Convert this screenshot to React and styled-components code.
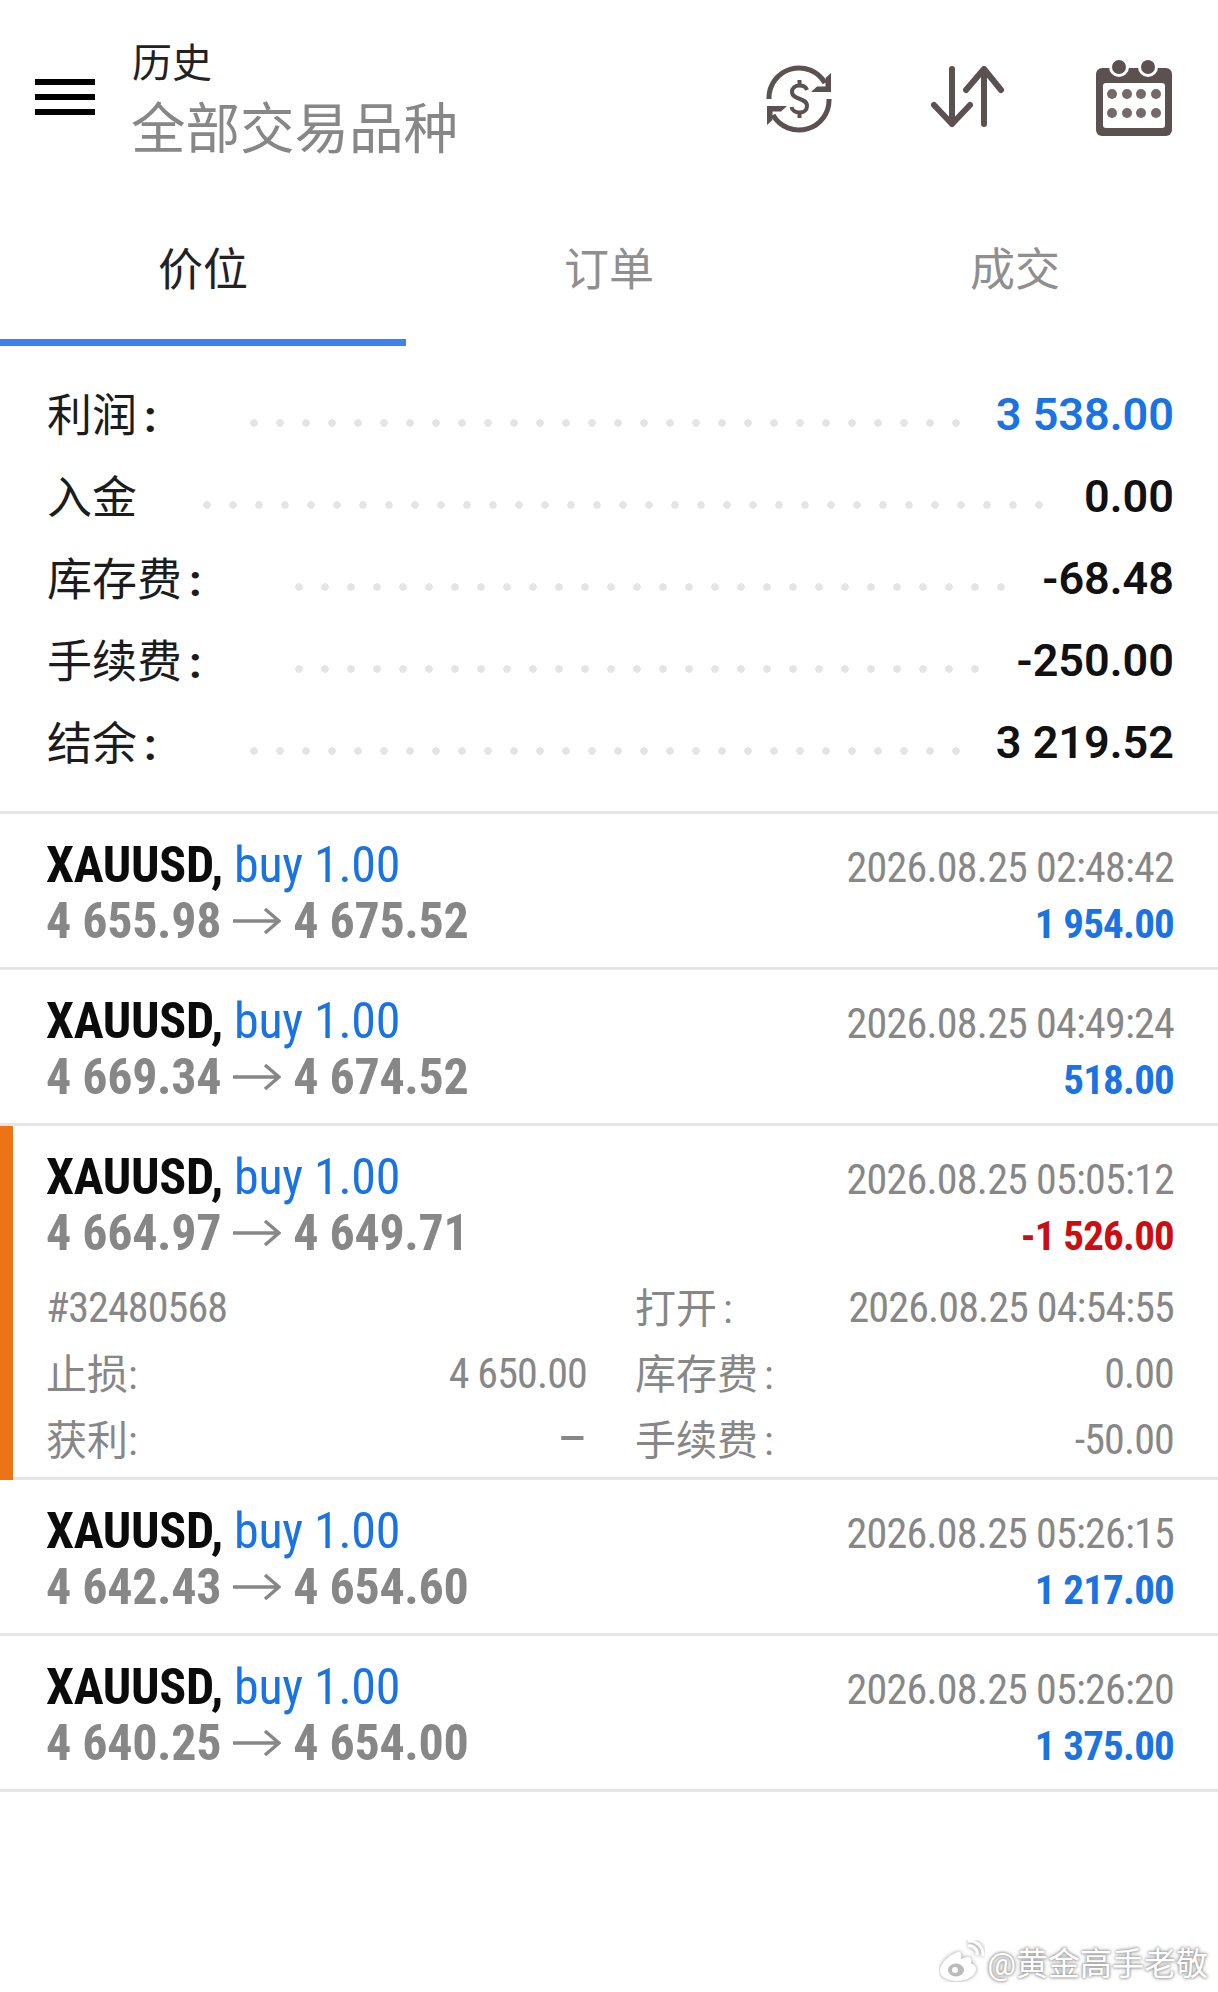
import React from 'react'
import styled, { createGlobalStyle } from 'styled-components'

const GlobalStyle = createGlobalStyle`
  html, body {
    margin: 0;
    padding: 0;
    background: #fff;
  }
  body {
    font-family: Roboto, "Noto Sans CJK SC", sans-serif;
  }
`

const BLUE = '#1a73e3'
const GREY = '#878787'
const ICON = '#5b5150'

const Page = styled.div`
  position: relative;
  width: 1218px;
  height: 1992px;
  overflow: hidden;
  background: #fff;
`

const Header = styled.header`
  display: flex;
  align-items: center;
  height: 194px;
  padding: 0 46px 0 35px;
  box-sizing: border-box;
`

const MenuButton = styled.div`
  display: flex;
  flex-direction: column;
  gap: 9px;
  width: 60px;
  margin-right: 37px;
  span {
    height: 6px;
    background: #000;
  }
`

const TitleBlock = styled.div`
  flex: 1;
  display: flex;
  flex-direction: column;
  padding-top: 10px;
`

const Title = styled.div`
  font-size: 40px;
  line-height: 46px;
  color: #222;
`

const Subtitle = styled.div`
  font-size: 54.500px;
  line-height: 70px;
  margin-top: 7px;
  margin-left: -1px;
  color: ${GREY};
`

const IconRow = styled.div`
  display: flex;
  align-items: center;
  gap: 92px;
`

const IconSlot = styled.div`
  display: flex;
  margin-left: ${p => p.$shift || 0}px;
  margin-top: ${p => p.$drop || 0}px;
`

const Tabs = styled.nav`
  display: flex;
  height: 152px;
`

const Tab = styled.div`
  flex: 1;
  display: flex;
  align-items: center;
  justify-content: center;
  box-sizing: border-box;
  font-size: 45px;
  color: ${p => (p.$active ? '#222' : '#8f8f8f')};
  border-bottom: 7px solid ${p => (p.$active ? '#3b82ee' : 'transparent')};
`

const Summary = styled.section`
  padding: 27px 44px 28px 47px;
  border-bottom: 3px solid #e6e6e6;
`

const SummaryRow = styled.div`
  display: flex;
  align-items: center;
  height: 82px;
`

const SummaryLabel = styled.span`
  font-size: 45px;
  margin-bottom: 4px;
  color: #1c1c1c;
  white-space: nowrap;
`

const Colon = styled.span`
  margin-left: 7px;
  font-weight: 700;
`

const Leader = styled.span`
  flex: 1;
  height: 8px;
  margin: 18px ${p => p.$gapRight}px 0 ${p => p.$gapLeft}px;
  background-image: radial-gradient(circle at 4px 4px, #e4e4e4 3.5px, transparent 4px);
  background-size: 26px 8px;
  background-repeat: repeat-x;
`

const SummaryValue = styled.span`
  font-size: 45px;
  font-weight: 650;
  color: ${p => p.$color || '#111'};
  white-space: nowrap;
`

const TradeRow = styled.article`
  position: relative;
  padding: 24px 44px 0 46px;
  height: ${p => (p.$expanded ? 327 : 129)}px;
  border-bottom: 3px solid #e6e6e6;
`

const SelectedBar = styled.span`
  position: absolute;
  left: 0;
  top: 0;
  bottom: -3px;
  width: 13px;
  background: #ec7417;
`

const TradeTop = styled.div`
  display: flex;
  justify-content: space-between;
`

const TradeLeft = styled.div`
  display: flex;
  flex-direction: column;
  margin-top: -1px;
`

const TradeRight = styled.div`
  display: flex;
  flex-direction: column;
  align-items: flex-end;
  margin-top: 1px;
`

const Instrument = styled.div`
  font-size: 50px;
  line-height: 56px;
  font-stretch: 75%;
  letter-spacing: -0.3px;
  white-space: nowrap;
  b {
    font-weight: 700;
    color: #0b0b0b;
  }
  span {
    color: ${BLUE};
  }
`

const Prices = styled.div`
  display: flex;
  align-items: center;
  gap: 12px;
  font-size: 50px;
  line-height: 56px;
  font-weight: 700;
  font-stretch: 75%;
  letter-spacing: -0.3px;
  color: ${GREY};
  white-space: nowrap;
`

const TradeDate = styled.div`
  font-size: 42px;
  line-height: 58px;
  font-stretch: 75%;
  letter-spacing: -0.75px;
  color: ${GREY};
  white-space: nowrap;
`

const Profit = styled.div`
  font-size: 41px;
  line-height: 54px;
  font-weight: 700;
  font-stretch: 75%;
  letter-spacing: -0.8px;
  color: ${p => (p.$loss ? '#cc0d12' : BLUE)};
  white-space: nowrap;
`

const Details = styled.div`
  display: grid;
  grid-template-columns: 541px 539px;
  column-gap: 48px;
  margin-top: 11px;
`

const DetailRow = styled.div`
  display: flex;
  align-items: center;
  justify-content: space-between;
  height: 66px;
  font-size: 42px;
  font-stretch: 75%;
  letter-spacing: -0.85px;
  color: ${GREY};
  white-space: nowrap;
`

const DetailLabel = styled.span`
  font-size: 41px;
  letter-spacing: 0;
  margin-bottom: 4px;
`

const DetailColon = styled.span`
  margin-left: 6px;
`

const EmptyValue = styled.span`
  font-size: 54px;
  line-height: 1;
`

const Watermark = styled.div`
  position: absolute;
  right: 10px;
  bottom: 8px;
  display: flex;
  align-items: center;
  gap: 2px;
  font-size: 32px;
  color: #fff;
  text-shadow: 0 0 3px #9a9a9a, 0 0 3px #9a9a9a, 0 0 5px #c4c4c4;
`

const SyncIcon = () => (
  <svg width="70" height="68" viewBox="0 0 70 68" fill="none">
    <g stroke={ICON} strokeWidth="5">
      <path d="M5 34A30 30 0 0 1 61 18" />
      <path d="M65 34A30 30 0 0 1 9 50" />
    </g>
    <path d="M67 8V27H47l6-5.5h8.5V13z" fill={ICON} />
    <path d="M3 60V41h20l-6 5.5H8.5V55z" fill={ICON} />
    <path
      d="M43 25C42 22 39 20.500 35.500 20.500 31 20.500 28 23 28 27 28 35.500 43 32 43 41 43 45 40 47.500 35.500 47.500 31 47.500 28 45 27.500 42M35.500 15V20.500M35.500 47.500V53"
      stroke={ICON}
      strokeWidth="4"
    />
  </svg>
)

const SortIcon = () => (
  <svg width="74" height="62" viewBox="0 0 74 62" fill="none" stroke={ICON} strokeWidth="6" strokeLinecap="round" strokeLinejoin="round">
    <path d="M22 3V58M4 39L22 58L40 39" />
    <path d="M54 58V3M36 24L54 3L71 24" />
  </svg>
)

const CalendarIcon = () => (
  <svg width="76" height="78" viewBox="0 0 76 78">
    <rect x="0" y="10" width="76" height="68" rx="6" fill={ICON} />
    <circle cx="23" cy="9" r="8.500" fill={ICON} stroke="#fff" strokeWidth="3" />
    <circle cx="52" cy="9" r="8.500" fill={ICON} stroke="#fff" strokeWidth="3" />
    <rect x="7" y="25" width="62" height="45" rx="3" fill="#fff" />
    {[36, 55].map(cy =>
      [16, 31, 45, 60].map(cx => <circle key={`${cx}-${cy}`} cx={cx} cy={cy} r="5" fill="#746a69" />)
    )}
  </svg>
)

const ArrowIcon = () => (
  <svg width="48" height="30" viewBox="0 0 48 30" fill="none" stroke="#878787" strokeWidth="3.500">
    <path d="M0 15H46M32 3L46 15L32 27" />
  </svg>
)

const WeiboIcon = () => (
  <svg width="46" height="42" viewBox="0 0 46 42" fill="none">
    <g style={{ filter: 'drop-shadow(0 0 2px #999)' }}>
      <path d="M19 12C9 15 1 24 1 31c0 6 8 10 17 10 11 0 19-6 19-12 0-4-4-5-5-6 1-3 0-6-3-6-3 0-6 1-7 2 1-4 0-8-3-7z" fill="#fff" />
      <ellipse cx="17" cy="30" rx="8" ry="6.500" fill="#bbb" />
      <circle cx="16" cy="30" r="3" fill="#fff" />
      <path d="M29 6c5-1 10 3 9 9M29 1c8-1 16 6 15 15" stroke="#fff" strokeWidth="3" />
    </g>
  </svg>
)

const summary = [
  { label: '利润', colon: true, value: '3 538.00', color: BLUE, gapLeft: 93, gapRight: 30 },
  { label: '入金', value: '0.00', gapLeft: 66, gapRight: 36 },
  { label: '库存费', colon: true, value: '-68.48', gapLeft: 93, gapRight: 30 },
  { label: '手续费', colon: true, value: '-250.00', gapLeft: 93, gapRight: 30 },
  { label: '结余', colon: true, value: '3 219.52', gapLeft: 93, gapRight: 30 },
]

const trades = [
  { from: '4 655.98', to: '4 675.52', date: '2026.08.25 02:48:42', profit: '1 954.00' },
  { from: '4 669.34', to: '4 674.52', date: '2026.08.25 04:49:24', profit: '518.00' },
  {
    from: '4 664.97',
    to: '4 649.71',
    date: '2026.08.25 05:05:12',
    profit: '-1 526.00',
    loss: true,
    expanded: true,
  },
  { from: '4 642.43', to: '4 654.60', date: '2026.08.25 05:26:15', profit: '1 217.00' },
  { from: '4 640.25', to: '4 654.00', date: '2026.08.25 05:26:20', profit: '1 375.00' },
]

const App = () => (
  <Page>
    <GlobalStyle />
    <Header>
      <MenuButton>
        <span />
        <span />
        <span />
      </MenuButton>
      <TitleBlock>
        <Title>历史</Title>
        <Subtitle>全部交易品种</Subtitle>
      </TitleBlock>
      <IconRow>
        <IconSlot $drop={3}>
          <SyncIcon />
        </IconSlot>
        <IconSlot $shift={4}>
          <SortIcon />
        </IconSlot>
        <IconSlot>
          <CalendarIcon />
        </IconSlot>
      </IconRow>
    </Header>
    <Tabs>
      <Tab $active>价位</Tab>
      <Tab>订单</Tab>
      <Tab>成交</Tab>
    </Tabs>
    <Summary>
      {summary.map(row => (
        <SummaryRow key={row.label}>
          <SummaryLabel>
            {row.label}
            {row.colon && <Colon>:</Colon>}
          </SummaryLabel>
          <Leader $gapLeft={row.gapLeft} $gapRight={row.gapRight} />
          <SummaryValue $color={row.color}>{row.value}</SummaryValue>
        </SummaryRow>
      ))}
    </Summary>
    {trades.map(trade => (
      <TradeRow key={trade.date} $expanded={trade.expanded}>
        {trade.expanded && <SelectedBar />}
        <TradeTop>
          <TradeLeft>
            <Instrument>
              <b>XAUUSD,</b> <span>buy 1.00</span>
            </Instrument>
            <Prices>
              {trade.from}
              <ArrowIcon />
              {trade.to}
            </Prices>
          </TradeLeft>
          <TradeRight>
            <TradeDate>{trade.date}</TradeDate>
            <Profit $loss={trade.loss}>{trade.profit}</Profit>
          </TradeRight>
        </TradeTop>
        {trade.expanded && (
          <Details>
            <DetailRow>#32480568</DetailRow>
            <DetailRow>
              <DetailLabel>打开<DetailColon>:</DetailColon></DetailLabel>
              2026.08.25 04:54:55
            </DetailRow>
            <DetailRow>
              <DetailLabel>止损:</DetailLabel>
              4 650.00
            </DetailRow>
            <DetailRow>
              <DetailLabel>库存费<DetailColon>:</DetailColon></DetailLabel>
              0.00
            </DetailRow>
            <DetailRow>
              <DetailLabel>获利:</DetailLabel>
              <EmptyValue>–</EmptyValue>
            </DetailRow>
            <DetailRow>
              <DetailLabel>手续费<DetailColon>:</DetailColon></DetailLabel>
              -50.00
            </DetailRow>
          </Details>
        )}
      </TradeRow>
    ))}
    <Watermark>
      <WeiboIcon />
      @黄金高手老敬
    </Watermark>
  </Page>
)

export default App
